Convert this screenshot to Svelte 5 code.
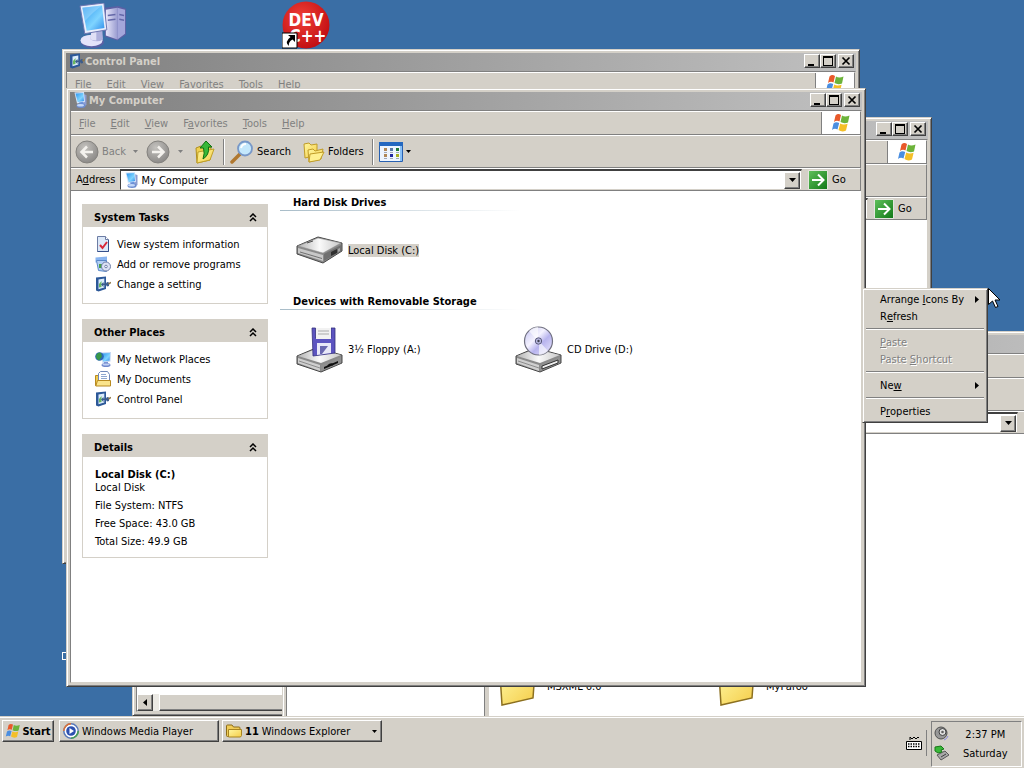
<script>
  const menus = ['File', 'Edit', 'View', 'Favorites', 'Tools', 'Help'];
  const accelerators = { Favorites: 1 };

  const panels = [
    {
      title: 'System Tasks',
      links: [
        { label: 'View system information', icon: 'info' },
        { label: 'Add or remove programs', icon: 'programs' },
        { label: 'Change a setting', icon: 'setting' },
      ],
    },
    {
      title: 'Other Places',
      links: [
        { label: 'My Network Places', icon: 'network' },
        { label: 'My Documents', icon: 'documents' },
        { label: 'Control Panel', icon: 'setting' },
      ],
    },
    { title: 'Details', links: [] },
  ];

  const groups = [
    {
      title: 'Hard Disk Drives',
      drives: [{ label: 'Local Disk (C:)', icon: 'disk', selected: true }],
    },
    {
      title: 'Devices with Removable Storage',
      drives: [
        { label: '3½ Floppy (A:)', icon: 'floppy' },
        { label: 'CD Drive (D:)', icon: 'cd' },
      ],
    },
  ];

  let collapsed = $state({});
</script>

<!-- shared gradients -->
<svg class="defs" width="0" height="0" aria-hidden="true">
  <defs>
    <linearGradient id="screen" x1="0" y1="0" x2="1" y2="1">
      <stop offset="0" stop-color="#2a94ee" />
      <stop offset="0.6" stop-color="#7fd4ff" />
      <stop offset="1" stop-color="#2f8cea" />
    </linearGradient>
    <linearGradient id="tower" x1="0" y1="0" x2="1" y2="0">
      <stop offset="0" stop-color="#e6e6fa" />
      <stop offset="1" stop-color="#9a9cd0" />
    </linearGradient>
    <linearGradient id="yellow" x1="0" y1="0" x2="1" y2="1">
      <stop offset="0" stop-color="#fff7a0" />
      <stop offset="1" stop-color="#f4cc48" />
    </linearGradient>
    <linearGradient id="metal" x1="0" y1="0" x2="1" y2="0">
      <stop offset="0" stop-color="#b4b4b4" />
      <stop offset="0.5" stop-color="#fafafa" />
      <stop offset="1" stop-color="#c8c8c8" />
    </linearGradient>
    <linearGradient id="green" x1="0" y1="0" x2="1" y2="1">
      <stop offset="0" stop-color="#5fbf5a" />
      <stop offset="1" stop-color="#127a18" />
    </linearGradient>
    <radialGradient id="round" cx="0.4" cy="0.3" r="0.7">
      <stop offset="0" stop-color="#c4c2be" />
      <stop offset="1" stop-color="#8c8a88" />
    </radialGradient>
    <radialGradient id="red" cx="0.4" cy="0.35" r="0.7">
      <stop offset="0" stop-color="#f04038" />
      <stop offset="1" stop-color="#c00c10" />
    </radialGradient>
    <linearGradient id="disc" x1="0" y1="0" x2="1" y2="1">
      <stop offset="0" stop-color="#c0c0f0" />
      <stop offset="0.4" stop-color="#f4f2ff" />
      <stop offset="0.6" stop-color="#b8b4ee" />
      <stop offset="1" stop-color="#eceaff" />
    </linearGradient>
  </defs>
</svg>

{#snippet flag(size)}
  <svg width={size} height={size} viewBox="0 0 20 20" aria-hidden="true">
    <path d="M4.500 2.500Q7 0 10 2L8.500 8.500Q5.500 7 3 9z" fill="#e8592a" />
    <path d="M11 2.500Q14 4.500 18.500 2.500L17 9.500Q13 11 9.500 9z" fill="#6cb33a" />
    <path d="M2.500 10.500Q5 8.300 8.200 10L6.500 16.500Q3.500 15 1 17z" fill="#4a8ee0" />
    <path d="M9.200 10.500Q12.500 12.400 16.600 10.700L15 17.500Q11 19.500 7.500 17z" fill="#f4bf28" />
  </svg>
{/snippet}

{#snippet icon(name)}
  {#if name === 'computer'}
    <svg width="16" height="16" viewBox="0 0 16 16" aria-hidden="true">
      <path d="M10 2l3.500 1v10l-3.500 2z" fill="#8c9cd0" />
      <path d="M1.500.500L11 0l1 10-8 1.500z" fill="#d4e4fa" />
      <path d="M2.500 1.500L10.300 1l.7 8-6.300 1z" fill="url(#screen)" />
      <path d="M6 10.500l4-.7.5 3.200H7z" fill="#6c94dc" />
      <ellipse cx="8" cy="13.700" rx="4.500" ry="2.200" fill="#6c8cd0" />
      <ellipse cx="7.500" cy="13.200" rx="3.500" ry="1.300" fill="#c4d8f8" />
    </svg>
  {:else if name === 'setting'}
    <svg width="16" height="16" viewBox="0 0 16 16" aria-hidden="true">
      <path d="M1 1.500L11 .500V13L3.500 15.500 1 14.500z" fill="#2c5898" />
      <path d="M3.500 3.500L9.300 2.600V11.500l-5.800 1.800z" fill="#dcecfc" />
      <path d="M4 8l2.500-3v6L4 11.500z" fill="#68b860" />
      <path d="M6 8.500L8.500 6v1.500H11L12 6l2 .500V10l-2 .500-1-1.500H8.500V11z" fill="#3c5c8c" />
      <path d="M13.500 8L16 6.500" stroke="#907848" stroke-width="1.500" />
    </svg>
  {:else if name === 'info'}
    <svg width="16" height="16" viewBox="0 0 16 16" aria-hidden="true">
      <path d="M2.500.500h8l3 3v12h-11z" fill="#dce8f8" stroke="#6c7ca4" />
      <path d="M13.500 4v11.500h-11" fill="none" stroke="#34508c" />
      <path d="M10.500.500v3h3" fill="#fff" stroke="#6c7ca4" />
      <path d="M5 9l2.500 3L12 6" fill="none" stroke="#d82838" stroke-width="2" />
    </svg>
  {:else if name === 'programs'}
    <svg width="16" height="16" viewBox="0 0 16 16" aria-hidden="true">
      <path d="M.500 1.500L12 .500v6H.500z" fill="#88b4f0" />
      <path d="M1.500 4.500h10v11l-8-1z" fill="#b4d0f4" stroke="#5a88c8" />
      <path d="M4 8h3v4H4z" fill="#48a048" />
      <circle cx="11" cy="10.500" r="4.500" fill="#dce2f4" stroke="#7080a8" />
      <circle cx="11" cy="10.500" r="1.300" fill="#fff" stroke="#7080a8" />
    </svg>
  {:else if name === 'network'}
    <svg width="16" height="16" viewBox="0 0 16 16" aria-hidden="true">
      <path d="M6 1.500L16 1l-.5 9.500L7.500 12z" fill="#c4d8f4" />
      <path d="M7 2.500l8-.4-.4 7.400-6.600 1z" fill="url(#screen)" />
      <circle cx="4.500" cy="5.500" r="4.300" fill="#2c68b8" />
      <path d="M1 4.500q2-4 5-2.500l1 3.500-3 4Q1 8.500 1 4.500z" fill="#389848" />
      <path d="M9 11h4v2H9z" fill="#7c94d4" />
      <ellipse cx="11" cy="14" rx="4.500" ry="2" fill="#7088cc" />
      <ellipse cx="11" cy="13.500" rx="3.500" ry="1" fill="#c0d0f4" />
    </svg>
  {:else if name === 'documents'}
    <svg width="16" height="16" viewBox="0 0 16 16" aria-hidden="true">
      <path d="M.500 4.500h4v10h-4z" fill="#f0cc50" stroke="#b88a20" />
      <path d="M3.500 2.500l2-2h7l2 3v10h-11z" fill="#fff" stroke="#7088b8" />
      <path d="M6 3.500h5M6 5.500h6M6 7.500h6" stroke="#90a8d0" />
      <path d="M2.500 9.500h13v5.500H.800z" fill="#fae48c" stroke="#b88a20" />
    </svg>
  {:else if name === 'folder'}
    <svg width="16" height="16" viewBox="0 0 16 16" aria-hidden="true">
      <path d="M.500 3q0-1 1-1H6l1.500 2H13q1 0 1 1v8.500H1.500q-1 0-1-1z" fill="#f0cc58" stroke="#8c6c18" />
      <path d="M2.500 6.500h13v6l-1 1.500h-12z" fill="url(#yellow)" stroke="#a88420" />
    </svg>
  {:else if name === 'player'}
    <svg width="16" height="16" viewBox="0 0 16 16" aria-hidden="true">
      <circle cx="8" cy="8" r="7.200" fill="#fff" stroke="#5878b8" stroke-width="1.500" />
      <path d="M8 .800A7.200 7.200 0 0 0 .800 8" fill="none" stroke="#e07030" stroke-width="1.500" />
      <path d="M15.200 8A7.200 7.200 0 0 1 8 15.200" fill="none" stroke="#48a050" stroke-width="1.500" />
      <circle cx="8" cy="8" r="4.800" fill="#2c50b0" />
      <path d="M6.500 5l4.500 3-4.500 3z" fill="#fff" />
    </svg>
  {/if}
{/snippet}

{#snippet drive(name)}
  <svg width="48" height="48" viewBox="0 0 48 48" aria-hidden="true">
    {#if name === 'disk'}
      <path d="M1 20L22 11l24 6v8L27 37 1 28z" fill="#8a8a8a" stroke="#484848" stroke-linejoin="round" />
      <path d="M2 20L22 12l23 5-18 10z" fill="url(#metal)" stroke="#8c8c8c" stroke-width="0.500" />
      <path d="M2 22l25 7v6L2 27z" fill="#c8c8c8" />
      <path d="M4 26l22 6.500" stroke="#707070" />
      <path d="M28 28l17-9v6L28 35z" fill="#707070" />
      <path d="M35 26l6-3v4l-6 3z" fill="#303030" />
      <path d="M42 23l2-1v3l-2 1z" fill="#a8a8a8" />
      <path d="M11 17l6-2" stroke="#505050" />
    {:else}
      <path d="M1 31l19-8 26 7v8L25 47 1 39z" fill="#8a8a8a" stroke="#484848" stroke-linejoin="round" />
      <path d="M2 31l18-7 25 6-20 8z" fill="url(#metal)" />
      <path d="M2 33l22 7v6L2 38z" fill="#cfcfcf" />
      <path d="M3 36l21 7" stroke="#8c8c8c" />
      <path d="M25 40l20-8v6l-20 8z" fill="#909090" />
    {/if}
    {#if name === 'floppy'}
      <path d="M28 42l14-6v2l-14 6z" fill="#101010" />
      <path d="M32 41q3-3 5-1" stroke="#101010" stroke-width="2" fill="none" />
      <path d="M16 3h3.500v10H35V3h4v25l-22 3z" fill="#5c54c0" stroke="#34307c" stroke-width="0.800" />
      <path d="M20 3h15v11H20z" fill="#f2f2f2" />
      <path d="M22 6h11M22 9h11" stroke="#aaa" />
      <path d="M21 18h14v10l-14 2z" fill="#e8e8f8" />
      <path d="M24 21h8l-6 8h-2z" fill="#6a68b0" />
    {:else if name === 'cd'}
      <path d="M27 41l16-6v3l-16 6z" fill="#f0f0f0" stroke="#303030" />
      <circle cx="23.500" cy="16" r="14" fill="url(#disc)" stroke="#707080" stroke-width="1.200" />
      <path d="M23 16L14 6q4-4 9-4zM24 16l9 10q-4 4-9 4z" fill="#fff" opacity="0.600" />
      <circle cx="23.500" cy="16" r="3.200" fill="#b8b8e0" stroke="#585878" />
      <circle cx="23.500" cy="16" r="1.200" fill="#404050" />
    {/if}
  </svg>
{/snippet}

{#snippet titleBar(title, iconName)}
  <header class="title-bar">
    {#if iconName}{@render icon(iconName)}{/if}
    <h2>{title}</h2>
    <div class="window-buttons">
      <button class="raised" aria-label="Minimize">
        <svg width="12" height="10" aria-hidden="true"><path d="M2 8h6v2H2z" /></svg>
      </button>
      <button class="raised" aria-label="Maximize">
        <svg width="12" height="10" aria-hidden="true"><path d="M1 0h10v10H1zM2 2v7h8V2z" fill-rule="evenodd" /></svg>
      </button>
      <button class="raised close" aria-label="Close">
        <svg width="12" height="10" aria-hidden="true">
          <path d="M2.500 1.500l7 7m0-7l-7 7" stroke="#000" stroke-width="1.700" />
        </svg>
      </button>
    </div>
  </header>
{/snippet}

{#snippet menuBar(items, underline)}
  <div class="menu-bar">
    <nav>
      {#each items as item}
        {@const at = accelerators[item] ?? 0}
        <button>{item.slice(0, at)}<span class:accel={underline}>{item[at]}</span>{item.slice(at + 1)}</button>
      {/each}
    </nav>
    <div class="flag-box">{@render flag(20)}</div>
  </div>
{/snippet}

{#snippet caret()}
  <svg class="caret" width="5" height="3" aria-hidden="true"><path d="M0 0h5L2.500 3z" fill="currentColor" /></svg>
{/snippet}

{#snippet addressBar(id, value)}
  <div class="address-bar">
    <label for={id}>{#if value}A<span class="accel">d</span>dress{/if}</label>
    <div class="combo">
      {#if value}{@render icon('computer')}{/if}
      <input {id} type="text" {value} aria-label="Address" />
      <button class="raised" aria-label="Show addresses">
        <svg width="7" height="4" aria-hidden="true"><path d="M0 0h7L3.500 4z" /></svg>
      </button>
    </div>
    <button class="go">
      <svg width="20" height="20" viewBox="0 0 20 20" aria-hidden="true">
        <path d="M.500.500h19v19H.500z" fill="#f4fff4" />
        <path d="M1 1h18v18H1z" fill="url(#green)" />
        <path d="M4 10h11M10 4.500L15.500 10 10 15.500" fill="none" stroke="#fff" stroke-width="2" />
      </svg>
      Go
    </button>
  </div>
{/snippet}

<div class="screen">
  <main class="desktop">
    <svg class="shortcut my-computer" viewBox="0 0 50 48" aria-label="My Computer" role="img">
      <path d="M27 5l14-2 8 3v27l-9 6-13-4z" fill="#5c60a4" />
      <path d="M28 7l12-2v33l-12-4z" fill="url(#tower)" />
      <path d="M40 5l8 2v25l-8 6z" fill="#a4a6da" />
      <path d="M30 13l8-1M30 18l8-1M42 12l5 1M42 17l5 1" stroke="#6468a8" stroke-width="1.500" />
      <ellipse cx="14" cy="41" rx="12" ry="6" fill="#5c60a4" />
      <ellipse cx="13" cy="39" rx="11.500" ry="6" fill="#e4e4fa" />
      <path d="M13 27l11-2 1 13q-6 4-13 0z" fill="#aeb0dc" />
      <path d="M13 27l5-1v13q-3 0-6-1z" fill="#e0e0f6" />
      <path d="M1 3L26 0l3 28L6 32z" fill="#e8eefc" stroke="#6c74b0" />
      <path d="M3.500 5L24 2.500l2.500 23.500L8 29z" fill="url(#screen)" />
      <path d="M3.500 5L24 2.500Q16 8 6 19z" fill="#b4e4ff" opacity="0.400" />
    </svg>
    <svg class="shortcut dev" viewBox="0 0 48 48" aria-label="Dev-C++" role="img">
      <circle cx="24" cy="24" r="23.500" fill="url(#red)" />
      <text x="24" y="25" text-anchor="middle" class="dev-text">DEV</text>
      <text x="26" y="41" text-anchor="middle" class="dev-text">C++</text>
      <path d="M0 32h15v15H0z" fill="#fff" stroke="#000" />
      <path d="M6 34h7v7l-2.500-2.500Q6 41 7 45q-5-4 1.500-9z" />
    </svg>
    <span class="marker"></span>

    <section class="window folders-window" aria-label="Folder tree">
      {@render titleBar('', '')}
      <div class="client">
        {@render menuBar([], false)}
        <div class="toolbar"></div>
        {@render addressBar('address-tree', '')}
        <div class="tree-pane">
          <div class="scrollbar">
            <button class="raised" aria-label="Scroll left">
              <svg width="4" height="7" aria-hidden="true"><path d="M4 0v7L0 3.500z" /></svg>
            </button>
            <div class="raised thumb"></div>
          </div>
        </div>
      </div>
    </section>

    <section class="window files-window" aria-label="Program files">
      {@render titleBar('', '')}
      <div class="client">
        {@render menuBar([], false)}
        <div class="toolbar"></div>
        {@render addressBar('address-files', '')}
        <div class="split">
          <div class="tree"></div>
          <ul class="files">
            {#each ['MSXML 6.0', 'MyParoo'] as name}
              <li>
                <svg width="40" height="40" viewBox="0 0 40 40" aria-hidden="true">
                  <path d="M1 8L14 5l3 4 19-4-2 27L3 39z" fill="url(#yellow)" stroke="#8c7020" stroke-width="1.500" />
                </svg>
                {name}
              </li>
            {/each}
          </ul>
        </div>
      </div>
    </section>

    <section class="window panel-window" aria-label="Control Panel">
      {@render titleBar('Control Panel', 'setting')}
      <div class="client">
        {@render menuBar(menus, false)}
      </div>
    </section>

    <section class="window computer-window" aria-label="My Computer">
      {@render titleBar('My Computer', 'computer')}
      <div class="client">
        {@render menuBar(menus, true)}
        <div class="toolbar">
          <button class="tool back" disabled>
            <svg width="24" height="24" viewBox="0 0 24 24" aria-hidden="true">
              <circle cx="12" cy="12" r="11" fill="url(#round)" stroke="#84827e" />
              <path d="M18 12H7M12 6.500L6.500 12l5.500 5.500" fill="none" stroke="#f4f2ee" stroke-width="2.500" />
            </svg>
            Back {@render caret()}
          </button>
          <button class="tool forward" disabled aria-label="Forward">
            <svg width="24" height="24" viewBox="0 0 24 24" aria-hidden="true">
              <circle cx="12" cy="12" r="11" fill="url(#round)" stroke="#84827e" />
              <path d="M6 12h11M12 6.500l5.500 5.500-5.500 5.500" fill="none" stroke="#f4f2ee" stroke-width="2.500" />
            </svg>
            {@render caret()}
          </button>
          <button class="tool up" aria-label="Up">
            <svg width="20" height="24" viewBox="0 0 20 24" aria-hidden="true">
              <path d="M1 8l5-2 2 2 8-1-1 13L2 23z" fill="#f0d050" stroke="#b09020" />
              <path d="M3 12l16-3-4 11-13 3z" fill="url(#yellow)" stroke="#c0a028" />
              <path d="M5 8l6-7 6 6h-3.500q1 8-5.500 12 2-6 .500-11z" fill="#38b838" stroke="#107010" />
            </svg>
          </button>
          <span class="divider"></span>
          <button class="tool search">
            <svg width="24" height="24" viewBox="0 0 24 24" aria-hidden="true">
              <path d="M2 22l8-8" stroke="#b07830" stroke-width="3.500" stroke-linecap="round" />
              <circle cx="15" cy="8.500" r="7" fill="#c4e8fc" stroke="#7898c8" stroke-width="1.800" />
              <path d="M11 8q1-4 5-4" stroke="#fff" stroke-width="2" fill="none" />
            </svg>
            Search
          </button>
          <button class="tool folders">
            <svg width="22" height="22" viewBox="0 0 22 22" aria-hidden="true">
              <path d="M1 3l5-1 2 2 6-1v11L2 17z" fill="url(#yellow)" stroke="#c09c28" />
              <path d="M5 9l5-1 2 2 8-2-2 10-12 3z" fill="url(#yellow)" stroke="#c09c28" />
              <path d="M7 13l14-2-4 8-11 2z" fill="#fff090" stroke="#c09c28" />
            </svg>
            Folders
          </button>
          <span class="divider"></span>
          <button class="tool views" aria-label="Views">
            <svg width="24" height="20" viewBox="0 0 24 20" aria-hidden="true">
              <path d="M.500.500h23v19H.500z" fill="#eef6ff" stroke="#2860b0" />
              <path d="M0 0h24v4H0z" fill="#2468c0" />
              <path d="M21 4h2v15h-2z" fill="#88c0f8" />
              <path d="M5 6h3v3H5zM5 12h3v3H5z" fill="#b08858" />
              <path d="M11 6h3v3h-3z" fill="#5878a8" />
              <path d="M11 12h3v3h-3z" fill="#2028a0" />
              <path d="M17 6h3v3h-3z" fill="#207838" />
              <path d="M17 12h3v3h-3z" fill="#a8b020" />
              <path d="M5 10.500h3m3 0h3m3 0h3M5 16.500h3m3 0h3m3 0h3" stroke="#a0a8b8" />
            </svg>
            {@render caret()}
          </button>
        </div>
        {@render addressBar('address', 'My Computer')}

        <div class="explorer">
          <aside>
            {#each panels as panel}
              <section class="panel">
                <h3>
                  {panel.title}
                  <button
                    aria-label="Toggle {panel.title}"
                    onclick={() => (collapsed[panel.title] = !collapsed[panel.title])}
                  >
                    <svg width="8" height="9" aria-hidden="true">
                      <path d="M1 4l3-3 3 3M1 8l3-3 3 3" fill="none" stroke="#000" stroke-width="1.500" />
                    </svg>
                  </button>
                </h3>
                {#if !collapsed[panel.title]}
                  {#if panel.links.length}
                    <ul>
                      {#each panel.links as link}
                        <li><a href="#{link.icon}">{@render icon(link.icon)}{link.label}</a></li>
                      {/each}
                    </ul>
                  {:else}
                    <div class="details">
                      <strong>Local Disk (C:)</strong>
                      <span>Local Disk</span>
                      <p>File System: NTFS</p>
                      <p>Free Space: 43.0 GB</p>
                      <p>Total Size: 49.9 GB</p>
                    </div>
                  {/if}
                {/if}
              </section>
            {/each}
          </aside>
          <div class="contents">
            {#each groups as group}
              <section>
                <h3>{group.title}</h3>
                <ul>
                  {#each group.drives as item}
                    <li>
                      {@render drive(item.icon)}
                      <span class:selected={item.selected}>{item.label}</span>
                    </li>
                  {/each}
                </ul>
              </section>
            {/each}
          </div>
        </div>
      </div>
    </section>

    <div class="context-menu" role="menu">
      <button role="menuitem">Arrange <span class="accel">I</span>cons By
        <svg width="4" height="7" aria-hidden="true"><path d="M0 0v7l4-3.500z" /></svg>
      </button>
      <button role="menuitem">R<span class="accel">e</span>fresh</button>
      <hr />
      <button role="menuitem" disabled><span class="accel">P</span>aste</button>
      <button role="menuitem" disabled>Paste <span class="accel">S</span>hortcut</button>
      <hr />
      <button role="menuitem">Ne<span class="accel">w</span>
        <svg width="4" height="7" aria-hidden="true"><path d="M0 0v7l4-3.500z" /></svg>
      </button>
      <hr />
      <button role="menuitem">P<span class="accel">r</span>operties</button>
    </div>

    <svg class="pointer" width="13" height="21" aria-hidden="true">
      <path d="M.500.500v16l4-3.500 3 6.500 2.500-1-3-6.500H12z" fill="#fff" stroke="#000" />
    </svg>
  </main>

  <footer class="taskbar">
    <button class="raised start">{@render flag(16)}Start</button>
    <button class="raised task">{@render icon('player')}Windows Media Player</button>
    <button class="raised task">{@render icon('folder')}<b>11</b> Windows Explorer {@render caret()}</button>
    <div class="tray">
      <svg class="keyboard" width="16" height="14" viewBox="0 0 16 14" aria-hidden="true">
        <path d="M4 4V1l2 2 2-2 2 2 2-2 1 1" fill="none" stroke="#000" />
        <path d="M.500 5.500h15v8H.500z" fill="#fff" stroke="#000" />
        <path d="M2 8h12M2 10.500h12" stroke="#000" stroke-dasharray="1.500 1" stroke-width="1.500" />
      </svg>
      <span class="tray-divider"></span>
      <div class="clock">
        <div class="tray-icons">
          <svg width="16" height="16" viewBox="0 0 16 16" aria-hidden="true">
            <circle cx="7" cy="7" r="6" fill="#989898" stroke="#505050" />
            <circle cx="8.500" cy="6" r="3.500" fill="#e0e0e0" stroke="#404040" />
            <circle cx="8.500" cy="6" r="1.300" fill="#606060" />
            <path d="M10 14q3-1 4-4" stroke="#8888e0" fill="none" />
          </svg>
          <svg width="16" height="16" viewBox="0 0 16 16" aria-hidden="true">
            <path d="M3 10l8-4 4 4-8 5z" fill="#a8a8a8" stroke="#585858" />
            <path d="M7 12l5-3" stroke="#404040" />
            <path d="M1 2l6-1 3 3-3 1 1 2-4 1-3-2z" fill="#38b838" stroke="#187818" />
          </svg>
        </div>
        <div class="time"><span>2:37 PM</span><span>Saturday</span></div>
      </div>
    </div>
  </footer>
</div>

<style>
  :global(body) {
    background: #3a6ea5;
  }

  .screen {
    --face: #d4d0c8;
    --shadow: #808080;
    --dark: #404040;
    display: flex;
    flex-direction: column;
    height: 100vh;
    font: 11px/13px 'DejaVu Sans Condensed', 'DejaVu Sans', sans-serif;
    color: #000;
    cursor: default;
  }

  .screen * {
    box-sizing: border-box;
  }

  .defs {
    position: absolute;
  }

  svg {
    display: block;
    flex-shrink: 0;
  }

  h2,
  h3,
  p,
  ul {
    margin: 0;
    padding: 0;
    font-size: 11px;
    list-style: none;
  }

  button,
  input {
    padding: 0;
    border: 0;
    background: none;
    font: inherit;
    color: inherit;
    white-space: nowrap;
  }

  .accel {
    text-decoration: underline;
  }

  .raised {
    display: flex;
    align-items: center;
    justify-content: center;
    background: var(--face);
    border: 1px solid;
    border-color: #fff var(--dark) var(--dark) #fff;
    box-shadow: inset -1px -1px var(--shadow);
  }

  /* desktop */
  .desktop {
    flex: 1;
    position: relative;
    overflow: hidden;
    background: #3a6ea5;
  }

  .shortcut,
  .marker,
  .window,
  .context-menu,
  .pointer {
    position: absolute;
  }

  .my-computer {
    left: 78px;
    top: 3px;
    width: 50px;
    height: 46px;
  }

  .dev {
    left: 282px;
    top: 1px;
    width: 48px;
    height: 48px;
  }

  .dev-text {
    font-size: 17px;
    font-weight: bold;
    fill: #fff;
  }

  .marker {
    left: 62px;
    top: 652px;
    width: 8px;
    height: 8px;
    border: 1px solid #fff;
  }

  /* windows */
  .window {
    display: flex;
    flex-direction: column;
    width: 800px;
    height: 599px;
    padding: 3px;
    background: var(--face);
    border: 1px solid;
    border-color: var(--face) var(--dark) var(--dark) var(--face);
    box-shadow:
      inset 1px 1px #fff,
      inset -1px -1px var(--shadow);
  }

  .folders-window {
    left: 132px;
    top: 117px;
  }

  .files-window {
    left: 282px;
    top: 331px;
  }

  .panel-window {
    left: 62px;
    top: 49px;
    width: 798px;
    height: 515px;
  }

  .computer-window {
    left: 66px;
    top: 88px;
  }

  .title-bar {
    display: flex;
    align-items: center;
    height: 18px;
    padding: 0 2px 2px 3px;
    background: linear-gradient(to right, #808080, #c0c0c0);
    color: var(--face);
  }

  .title-bar h2 {
    flex: 1;
  }

  .window-buttons {
    display: flex;
  }

  .window-buttons button {
    width: 16px;
    height: 14px;
  }

  .window-buttons .close {
    margin-left: 2px;
  }

  .client {
    flex: 1;
    display: flex;
    flex-direction: column;
    min-height: 0;
    border: 1px solid var(--shadow);
    border-right-color: var(--face);
    border-bottom-color: var(--face);
    background: #fff;
  }

  .menu-bar,
  .toolbar,
  .address-bar {
    display: flex;
    align-items: center;
    flex-shrink: 0;
    background: var(--face);
    border-top: 1px solid #fff;
    border-right: 1px solid var(--shadow);
    border-bottom: 1px solid var(--shadow);
  }

  .menu-bar {
    height: 24px;
  }

  .menu-bar nav {
    flex: 1;
    display: flex;
    gap: 15px;
    padding-left: 8px;
    color: var(--shadow);
  }

  .flag-box {
    display: flex;
    align-items: center;
    justify-content: center;
    align-self: stretch;
    width: 39px;
    border-left: 1px solid var(--shadow);
    background: #fff;
  }

  .toolbar {
    height: 33px;
    padding-left: 4px;
  }

  .tool {
    display: flex;
    align-items: center;
    gap: 3px;
  }

  .tool:disabled {
    color: var(--shadow);
  }

  .back {
    margin-right: 8px;
  }

  .back .caret {
    margin-left: 4px;
  }

  .forward {
    gap: 8px;
    margin-right: 12px;
  }

  .divider {
    width: 2px;
    height: 26px;
    margin: 0 5px 0 8px;
    border-left: 1px solid var(--shadow);
    border-right: 1px solid #fff;
  }

  .search {
    margin-right: 12px;
  }

  .address-bar {
    height: 23px;
    padding-left: 5px;
  }

  .address-bar label {
    margin-right: 5px;
  }

  .combo {
    flex: 1;
    align-self: stretch;
    display: flex;
    align-items: center;
    padding: 0 1px 0 3px;
    background: #fff;
    border: 1px solid var(--dark);
    border-top-width: 2px;
    border-bottom: 1px solid var(--face);
    border-right-color: var(--face);
  }

  .combo input {
    flex: 1;
    min-width: 0;
    margin-left: 1px;
    outline: 0;
  }

  .combo button {
    width: 16px;
    height: 17px;
  }

  .go {
    display: flex;
    align-items: center;
    gap: 4px;
    width: 58px;
    padding-left: 6px;
  }

  /* background windows */
  .tree-pane {
    flex: 1;
    display: flex;
    align-items: flex-end;
  }

  .scrollbar {
    display: flex;
    width: 300px;
    height: 17px;
    background: #ebe9e4;
  }

  .scrollbar button {
    width: 16px;
    margin-right: 6px;
  }

  .thumb {
    flex: 1;
  }

  .split {
    flex: 1;
    display: flex;
    min-height: 0;
  }

  .tree {
    width: 198px;
    border-right: 1px solid var(--shadow);
  }

  .files {
    flex: 1;
    display: grid;
    grid-template-columns: repeat(2, 219px);
    align-items: start;
    padding: 232px 0 0 10px;
    border-left: 4px solid var(--face);
  }

  .files li {
    display: flex;
    align-items: center;
    gap: 8px;
  }

  /* explorer */
  .explorer {
    flex: 1;
    display: flex;
  }

  aside {
    display: flex;
    flex-direction: column;
    gap: 15px;
    width: 197px;
    padding-top: 13px;
    padding-left: 11px;
  }

  .panel {
    border: 1px solid var(--face);
  }

  .panel h3 {
    display: flex;
    align-items: center;
    justify-content: space-between;
    height: 22px;
    padding: 2px 10px 0 11px;
    background: var(--face);
  }

  .panel ul {
    padding: 7px 0 9px 12px;
  }

  .panel a {
    display: flex;
    align-items: center;
    gap: 6px;
    height: 20px;
    color: #000;
    text-decoration: none;
  }

  .details {
    padding: 11px 12px 9px;
  }

  .details strong,
  .details span {
    display: block;
  }

  .details p {
    margin-top: 5px;
  }

  .contents {
    flex: 1;
    padding: 5px 0 0 12px;
  }

  .contents h3 {
    width: 240px;
    height: 15px;
    padding-left: 13px;
    border-bottom: 1px solid;
    border-image: linear-gradient(to right, #a8bcc8, #fff) 1;
    white-space: nowrap;
  }

  .contents ul {
    display: grid;
    grid-template-columns: repeat(2, 219px);
    padding: 15px 0 21px 16px;
  }

  .contents li {
    display: flex;
    align-items: center;
    gap: 4px;
  }

  .selected {
    background: var(--face);
  }

  /* context menu */
  .context-menu {
    left: 862px;
    top: 288px;
    width: 126px;
    padding: 2px;
    background: var(--face);
    border: 1px solid;
    border-color: var(--face) var(--dark) var(--dark) var(--face);
    box-shadow:
      inset 1px 1px #fff,
      inset -1px -1px var(--shadow);
  }

  .context-menu button {
    display: flex;
    align-items: center;
    width: 100%;
    height: 17px;
    padding-left: 15px;
    white-space: pre;
  }

  .context-menu button:disabled {
    color: var(--shadow);
    text-shadow: 1px 1px #fff;
  }

  .context-menu svg {
    margin: 0 6px 0 auto;
  }

  hr {
    height: 2px;
    margin: 3px 1px 4px;
    border: 0;
    border-top: 1px solid var(--shadow);
    border-bottom: 1px solid #fff;
  }

  .pointer {
    left: 988px;
    top: 288px;
  }

  /* taskbar */
  .taskbar {
    display: flex;
    align-items: flex-start;
    height: 52px;
    padding: 2px 2px 0;
    background: var(--face);
    border-top: 1px solid var(--face);
    box-shadow: inset 0 1px #fff;
  }

  .taskbar .raised {
    height: 22px;
    margin-top: 1px;
  }

  .start {
    gap: 1px;
    width: 52px;
    margin-right: 5px;
    font-weight: bold;
  }

  .task {
    width: 160px;
    margin-right: 3px;
  }

  .taskbar .task {
    justify-content: flex-start;
    gap: 3px;
    padding: 0 4px 0 3px;
  }

  .task .caret {
    margin-left: auto;
  }

  .tray {
    display: flex;
    align-items: center;
    gap: 4px;
    margin-left: auto;
  }

  .tray-divider {
    width: 1px;
    height: 26px;
    background: var(--shadow);
  }

  .clock {
    display: flex;
    gap: 13px;
    width: 91px;
    height: 46px;
    margin-top: 2px;
    padding: 4px 2px;
    border: 1px solid;
    border-color: var(--shadow) #fff #fff var(--shadow);
  }

  .tray-icons {
    display: grid;
    gap: 3px;
    align-content: start;
  }

  .time {
    display: grid;
    gap: 6px;
    align-content: start;
    justify-items: center;
    padding-top: 2px;
  }
</style>
